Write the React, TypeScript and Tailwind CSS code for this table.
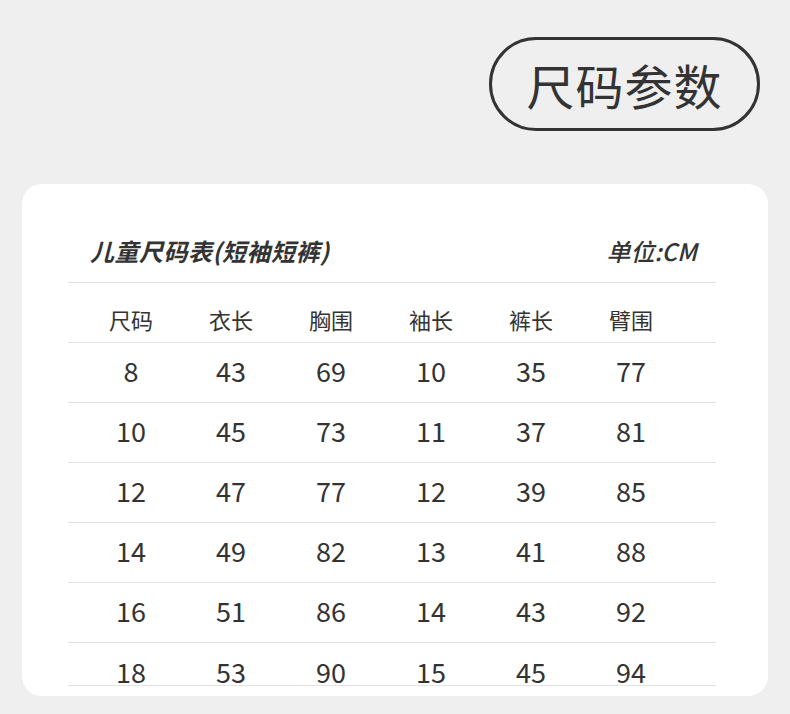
import React from "react";

const cols = ["尺码", "衣长", "胸围", "袖长", "裤长", "臂围"];
const rows = [
  ["8", "43", "69", "10", "35", "77"],
  ["10", "45", "73", "11", "37", "81"],
  ["12", "47", "77", "12", "39", "85"],
  ["14", "49", "82", "13", "41", "88"],
  ["16", "51", "86", "14", "43", "92"],
  ["18", "53", "90", "15", "45", "94"],
];

const font = { fontFamily: '"Noto Sans CJK SC", "Noto Sans", sans-serif' };

export default function App() {
  return (
    <div className="w-[790px] h-[714px] bg-[#efefef] text-[#333] overflow-hidden" style={font}>
      <div className="flex justify-end pt-[37px] pr-[30px]">
        <div className="w-[271px] h-[94px] border-[3px] border-[#333] rounded-full flex items-center justify-center text-[48px] tracking-[1px] leading-none">
          尺码参数
        </div>
      </div>
      <div className="mt-[53px] ml-[22px] w-[746px] h-[512px] bg-white rounded-[20px] pl-[46px] pr-[52px] pt-[38px] overflow-hidden">
        <div className="flex items-center justify-between h-[61px] border-b border-[#e3e3e3] pl-[22px] pr-[19px] pb-[3px]">
          <div className="text-[24px] font-bold italic tracking-[0.5px]">儿童尺码表(短袖短裤)</div>
          <div className="text-[24px] font-medium italic">单位:CM</div>
        </div>
        <div className="grid grid-cols-[100px_100px_100px_100px_100px_100px] pl-[13px] h-[60px] items-center border-b border-[#e3e3e3] text-[22px]">
          {cols.map((c) => (
            <div key={c} className="text-center pt-[14px]">{c}</div>
          ))}
        </div>
        {rows.map((r, i) => (
          <div
            key={i}
            className={`grid grid-cols-[100px_100px_100px_100px_100px_100px] pl-[13px] ${i === rows.length - 1 ? "h-[43px] items-start" : "h-[60px] items-center"} border-b border-[#e3e3e3] text-[27px]`}
          >
            {r.map((v, j) => (
              <div key={j} className={`text-center ${i === rows.length - 1 ? "leading-none pt-[15px]" : "-mt-[3px]"}`}>{v}</div>
            ))}
          </div>
        ))}
      </div>
    </div>
  );
}
